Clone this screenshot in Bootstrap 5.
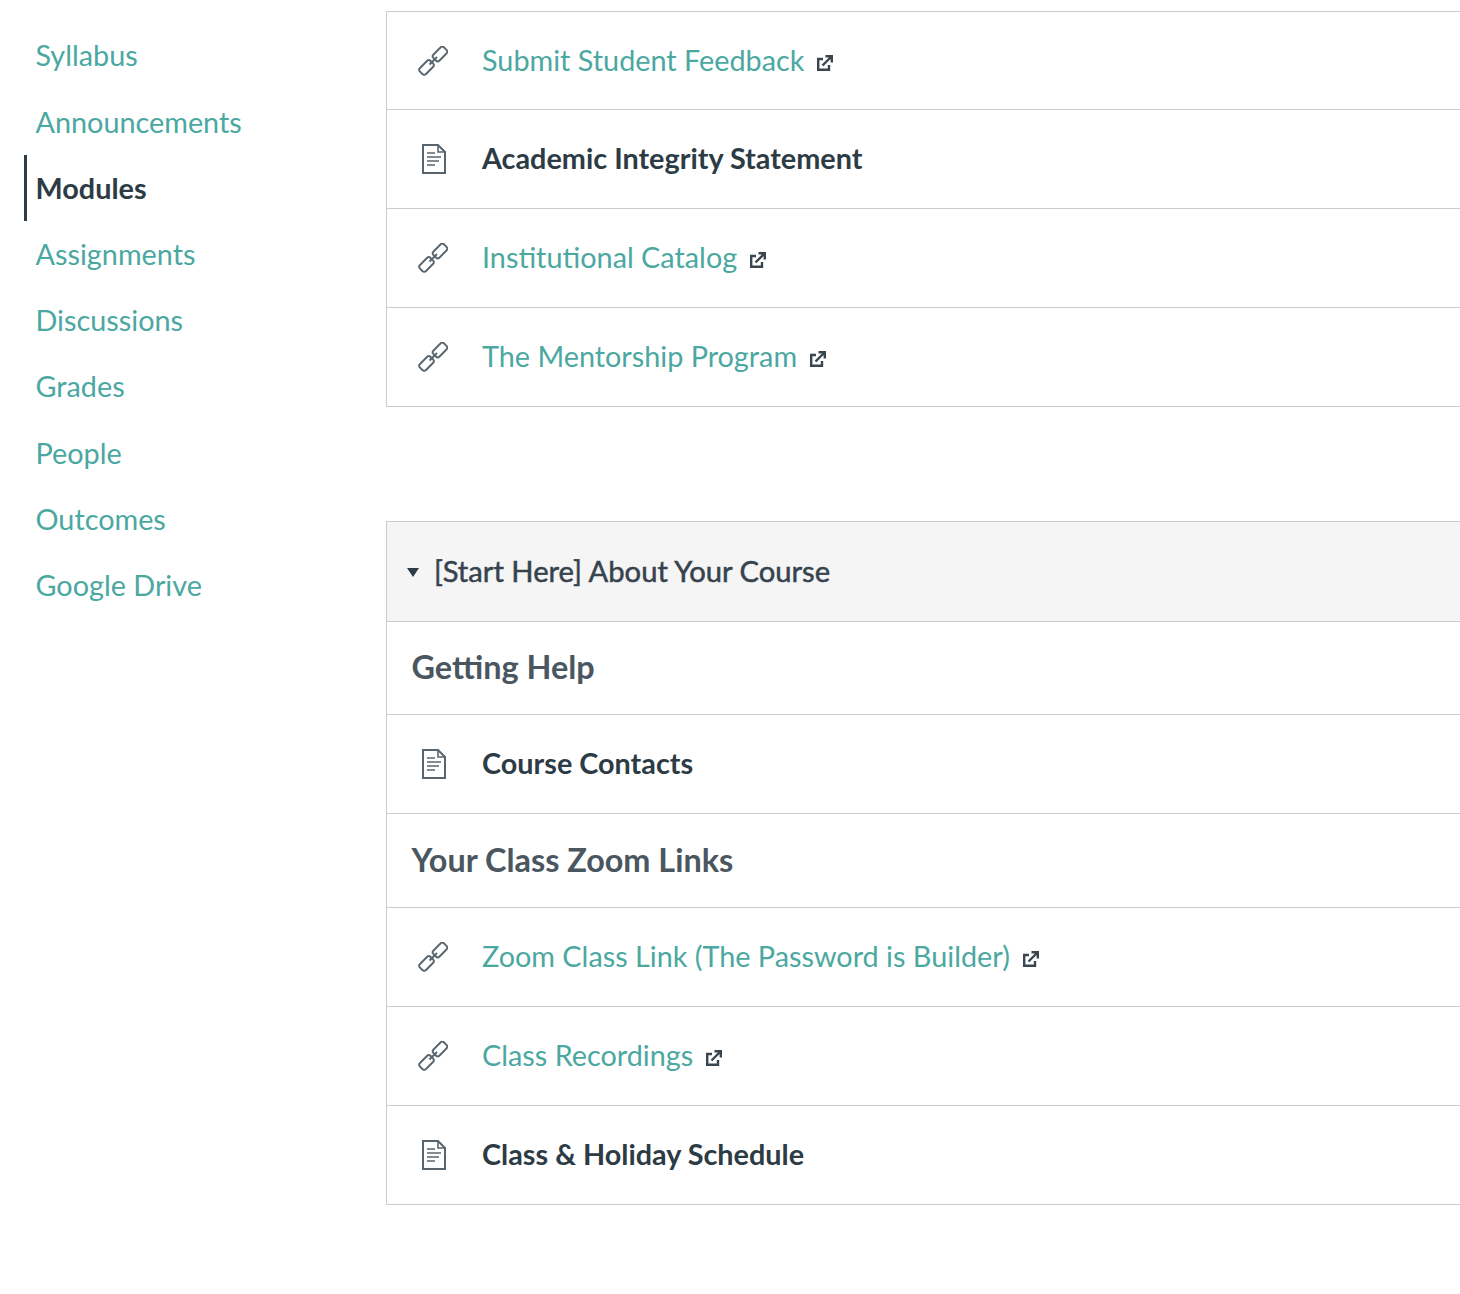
<!DOCTYPE html>
<html lang="en">
<head>
  <meta charset="UTF-8" />
  <title>Modules</title>
  <link href="https://cdn.jsdelivr.net/npm/bootstrap@5.3.2/dist/css/bootstrap.min.css" rel="stylesheet" />
  <style>
    html, body { height: 100%; overflow: hidden; }
    body { font-family: "Lato", sans-serif; background: #fff; color: #2d3b45; }
    .page-wrap { height: 1294px; overflow: hidden; }
    .course-nav { width: 386px; flex: none; padding-left: 24px; padding-top: 22.45px; }
    .course-nav a { display: block; height: 66.2px; line-height: 66.2px; padding-left: 9.5px; font-size: 28.8px; color: #4ba8a1; text-decoration: none; border-left: 2px solid transparent; }
    .course-nav a.current { color: #2d3b45; font-weight: 700; border-left: 3px solid #2d3b45; padding-left: 8.5px; }
    .mod-col { flex: 1 1 auto; min-width: 0; margin-top: 11px; }
    .mod-box { border-left: 1px solid #c7cdd1; border-top: 1px solid #c7cdd1; }
    .mod-gap { height: 114px; }
    .mod-head { height: 100px; background: #f5f5f5; border-bottom: 1px solid #c7cdd1; padding-left: 20px; padding-bottom: 1px; font-size: 29.2px; color: #36434d; gap: 15px; -webkit-text-stroke: 0.5px #36434d; }
    .mod-caret { width: 12px; height: 9px; flex: none; margin-top: 2px; }
    .mod-row { height: 99px; border-bottom: 1px solid #c7cdd1; }
    .mod-row.first-row { height: 98px; padding-top: 1px; }
    .mod-sub { height: 93px; border-bottom: 1px solid #c7cdd1; padding-left: 24.5px; padding-bottom: 1px; font-size: 32.4px; font-weight: 700; color: #4a5660; }
    .mod-sub.tall { height: 94px; }
    .mod-icon { width: 95px; flex: none; padding-left: 31px; }
    .mod-icon svg { display: block; }
    .mod-icon.page-ic { padding-left: 35px; }
    .mod-link { font-size: 28.8px; color: #4ba8a1; text-decoration: none; }
    .mod-page { font-size: 28.8px; font-weight: 700; color: #2d3b45; text-decoration: none; }
    .ext-icon { margin-left: 13px; flex: none; margin-top: 4px; }
  </style>
</head>
<body>
<svg width="0" height="0" class="d-block">
  <symbol id="ic-link" viewBox="0 0 30 30">
    <g fill="none" stroke="#59656e" stroke-width="1.9" stroke-linejoin="round">
      <rect x="1" y="17.25" width="15" height="8.5" rx="2.6" transform="rotate(-45 8.5 21.5)"/>
      <rect x="14.5" y="3.75" width="15" height="8.5" rx="2.6" transform="rotate(-45 22 8)"/>
      <path d="M11.5 18.5l7.5-7.5"/>
    </g>
  </symbol>
  <symbol id="ic-page" viewBox="0 0 24 30">
    <g fill="none" stroke="#59656e" stroke-width="2">
      <path d="M1 1h15l7 7v21H1z"/>
      <path d="M16 1v7h7" stroke-width="1.6"/>
      <path d="M5 9h8M5 13h14M5 17h12M5 21h8" stroke-width="1.7"/>
    </g>
  </symbol>
  <symbol id="ic-ext" viewBox="0 0 16 16">
    <g fill="none" stroke="#3a464f" stroke-width="2.4">
      <path d="M6 4H1.2v10.8H12V10"/>
      <path d="M5.5 10.5L14 2M8.5 1.2h6.3v6.3"/>
    </g>
  </symbol>
</svg>
<div class="page-wrap d-flex">
  <nav class="course-nav">
    <a href="#">Syllabus</a>
    <a href="#">Announcements</a>
    <a href="#" class="current">Modules</a>
    <a href="#">Assignments</a>
    <a href="#">Discussions</a>
    <a href="#">Grades</a>
    <a href="#">People</a>
    <a href="#">Outcomes</a>
    <a href="#">Google Drive</a>
  </nav>
  <main class="mod-col">
    <div class="mod-box">
      <div class="mod-row first-row d-flex align-items-center">
        <span class="mod-icon"><svg width="30" height="30"><use href="#ic-link"/></svg></span>
        <a href="#" class="mod-link">Submit Student Feedback</a>
        <svg class="ext-icon" width="16" height="16"><use href="#ic-ext"/></svg>
      </div>
      <div class="mod-row d-flex align-items-center">
        <span class="mod-icon page-ic"><svg width="24" height="30"><use href="#ic-page"/></svg></span>
        <a href="#" class="mod-page">Academic Integrity Statement</a>
      </div>
      <div class="mod-row d-flex align-items-center">
        <span class="mod-icon"><svg width="30" height="30"><use href="#ic-link"/></svg></span>
        <a href="#" class="mod-link">Institutional Catalog</a>
        <svg class="ext-icon" width="16" height="16"><use href="#ic-ext"/></svg>
      </div>
      <div class="mod-row d-flex align-items-center">
        <span class="mod-icon"><svg width="30" height="30"><use href="#ic-link"/></svg></span>
        <a href="#" class="mod-link">The Mentorship Program</a>
        <svg class="ext-icon" width="16" height="16"><use href="#ic-ext"/></svg>
      </div>
    </div>
    <div class="mod-gap"></div>
    <div class="mod-box">
      <div class="mod-head d-flex align-items-center">
        <svg class="mod-caret" viewBox="0 0 12 9"><path d="M0 0h12L6 9z" fill="#2d3b45"/></svg>
        <span>[Start Here] About Your Course</span>
      </div>
      <div class="mod-sub d-flex align-items-center">Getting Help</div>
      <div class="mod-row d-flex align-items-center">
        <span class="mod-icon page-ic"><svg width="24" height="30"><use href="#ic-page"/></svg></span>
        <a href="#" class="mod-page">Course Contacts</a>
      </div>
      <div class="mod-sub tall d-flex align-items-center">Your Class Zoom Links</div>
      <div class="mod-row d-flex align-items-center">
        <span class="mod-icon"><svg width="30" height="30"><use href="#ic-link"/></svg></span>
        <a href="#" class="mod-link">Zoom Class Link (The Password is Builder)</a>
        <svg class="ext-icon" width="16" height="16"><use href="#ic-ext"/></svg>
      </div>
      <div class="mod-row d-flex align-items-center">
        <span class="mod-icon"><svg width="30" height="30"><use href="#ic-link"/></svg></span>
        <a href="#" class="mod-link">Class Recordings</a>
        <svg class="ext-icon" width="16" height="16"><use href="#ic-ext"/></svg>
      </div>
      <div class="mod-row d-flex align-items-center">
        <span class="mod-icon page-ic"><svg width="24" height="30"><use href="#ic-page"/></svg></span>
        <a href="#" class="mod-page">Class &amp; Holiday Schedule</a>
      </div>
    </div>
  </main>
</div>
<script src="https://cdn.jsdelivr.net/npm/bootstrap@5.3.2/dist/js/bootstrap.bundle.min.js"></script>
</body>
</html>
